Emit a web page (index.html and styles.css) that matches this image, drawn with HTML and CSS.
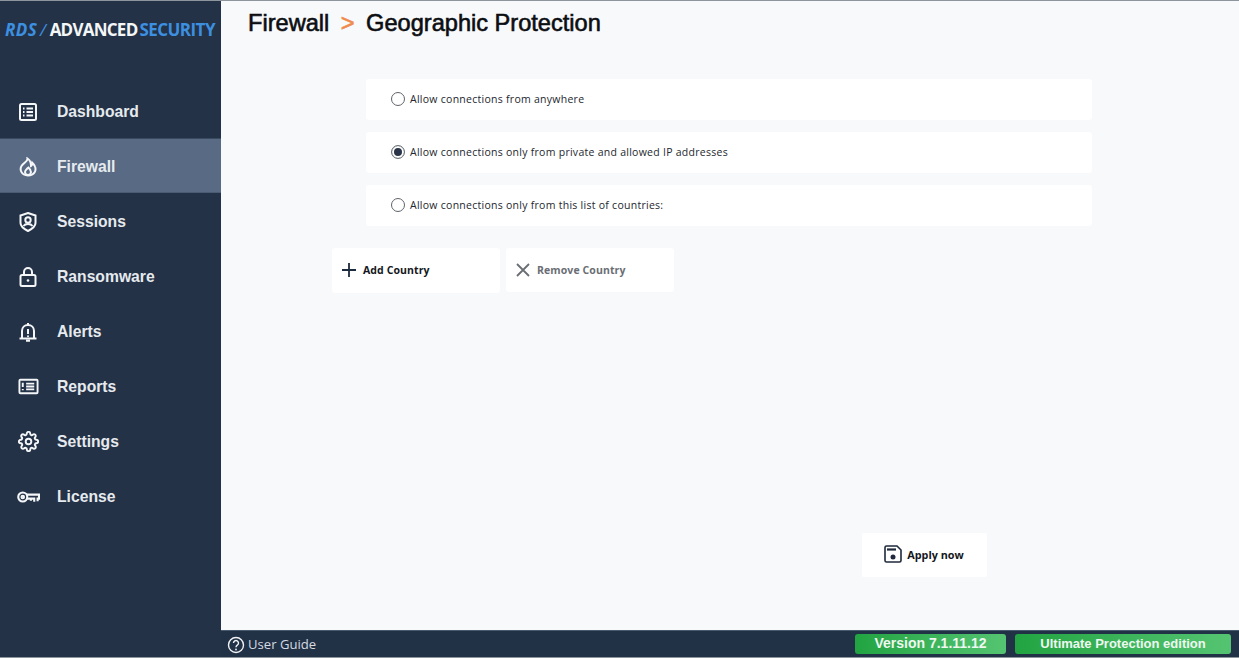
FILE: index.html
```html
<!DOCTYPE html>
<html lang="en">
<head>
<meta charset="utf-8">
<title>RDS Advanced Security</title>
<link rel="stylesheet" href="styles.css">
</head>
<body>
<div class="app">
  <aside class="sidebar">
    <div class="logo"><span class="logo-rds">RDS</span><span class="logo-slash">/</span><span class="logo-adv">ADVANCED</span><span class="logo-sec">SECURITY</span></div>
    <nav class="nav">
      <a class="nav-item"><svg class="nav-icon" viewBox="0 0 20 20"><rect x="2" y="2" width="16" height="16" rx="1.5"/><path d="M5 6.500h1.500M8.500 6.500H15M5 10h1.500M8.500 10H15M5 13.500h1.500M8.500 13.500H15"/></svg><span>Dashboard</span></a>
      <a class="nav-item active"><svg class="nav-icon" viewBox="0 0 20 20"><path d="M9.500 1.500c.5 3-4 4.300-6 7.500-2 3.500-.5 9 6.500 9.500 6.500 0 8.500-5 7-9-.5-1.500-1.500-2.500-2.500-3.500 0 1.500-.5 2.500-1.500 3C13 6 12 3 9.500 1.500z"/><path d="M10 10c.5 1.500-3 2.500-3 5 0 1.500 1.500 3 3 3s3-1.500 3-3c0-2-1.500-3.500-3-5z"/></svg><span>Firewall</span></a>
      <a class="nav-item"><svg class="nav-icon" viewBox="0 0 20 20"><path d="M10 1l7.500 2.500v7.500c0 3.500-3.500 6-7.500 8-4-2-7.500-4.500-7.500-8V3.500z"/><circle cx="10" cy="8" r="2.700"/><path d="M5.500 14c1-1.500 2.500-2 4.500-2s3.500.5 4.500 2"/></svg><span>Sessions</span></a>
      <a class="nav-item"><svg class="nav-icon" viewBox="0 0 20 20"><rect x="2.500" y="8" width="15" height="11" rx="1.500"/><path d="M6 8V5a4 4 0 0 1 8 0v3"/><circle class="fill" cx="10" cy="13.500" r="1.300"/></svg><span>Ransomware</span></a>
      <a class="nav-item"><svg class="nav-icon" viewBox="0 0 20 20"><path d="M1.500 16.500h17M4 16.500V9c0-3.500 2.500-6 6-6s6 2.500 6 6v7.500M10 1v2M8 18.800h4M10 7v5"/><circle class="fill" cx="10" cy="14.300" r="1"/></svg><span>Alerts</span></a>
      <a class="nav-item"><svg class="nav-icon wide" viewBox="0 0 22 20"><rect x="1.500" y="3" width="19" height="14" rx="1"/><path d="M5 6v4.500M5 12.500v1.500M8.500 7H17M8.500 10H17M8.500 13H17"/></svg><span>Reports</span></a>
      <a class="nav-item"><svg class="nav-icon wide gear" viewBox="0 0 24 24"><circle cx="12" cy="12" r="3.200"/><path d="M19.400 15a1.650 1.650 0 0 0 .33 1.820l.06.06a2 2 0 0 1 0 2.830 2 2 0 0 1-2.830 0l-.06-.06a1.650 1.650 0 0 0-1.820-.33 1.650 1.650 0 0 0-1 1.510V21a2 2 0 0 1-2 2 2 2 0 0 1-2-2v-.09A1.650 1.650 0 0 0 9 19.400a1.650 1.650 0 0 0-1.820.33l-.06.06a2 2 0 0 1-2.830 0 2 2 0 0 1 0-2.830l.06-.06a1.650 1.650 0 0 0 .33-1.820 1.650 1.650 0 0 0-1.510-1H3a2 2 0 0 1-2-2 2 2 0 0 1 2-2h.09A1.650 1.650 0 0 0 4.600 9a1.650 1.650 0 0 0-.33-1.820l-.06-.06a2 2 0 0 1 0-2.830 2 2 0 0 1 2.830 0l.06.06a1.650 1.650 0 0 0 1.820.33H9a1.650 1.650 0 0 0 1-1.510V3a2 2 0 0 1 2-2 2 2 0 0 1 2 2v.09a1.650 1.650 0 0 0 1 1.510 1.650 1.650 0 0 0 1.820-.33l.06-.06a2 2 0 0 1 2.830 0 2 2 0 0 1 0 2.830l-.06.06a1.650 1.650 0 0 0-.33 1.820V9a1.650 1.650 0 0 0 1.510 1H21a2 2 0 0 1 2 2 2 2 0 0 1-2 2h-.09a1.650 1.650 0 0 0-1.510 1z"/></svg><span>Settings</span></a>
      <a class="nav-item"><svg class="nav-icon key" viewBox="0 0 24 14"><circle cx="6" cy="7" r="4.700"/><circle cx="6" cy="7" r="1.300"/><path d="M10.500 4.500H23v4.200h-1.500V11.500M10.500 8.700H18V12M14.500 8.700V11"/></svg><span>License</span></a>
    </nav>
  </aside>
  <div class="main">
    <main class="content">
      <h1 class="title"><span>Firewall</span><span class="sep">&gt;</span><span>Geographic Protection</span></h1>
      <div class="options">
        <label class="option"><span class="radio"></span>Allow connections from anywhere</label>
        <label class="option"><span class="radio checked"></span>Allow connections only from private and allowed IP addresses</label>
        <label class="option"><span class="radio"></span>Allow connections only from this list of countries:</label>
      </div>
      <div class="actions">
        <button class="btn add"><svg class="btn-icon" viewBox="0 0 16 16"><path d="M8 1v14M1 8h14"/></svg>Add Country</button>
        <button class="btn remove"><svg class="btn-icon" viewBox="0 0 16 16"><path d="M2 2l12 12M14 2L2 14"/></svg>Remove Country</button>
      </div>
      <div class="apply-row">
        <button class="apply"><svg class="apply-icon" viewBox="0 0 18 18"><path d="M2.500 1h10.500l4 4v10.500a1.500 1.500 0 0 1-1.500 1.500h-13A1.500 1.500 0 0 1 1 15.500v-13A1.500 1.500 0 0 1 2.500 1z"/><path class="thick" d="M3 4.500h9"/><circle class="fill" cx="9" cy="12" r="2.500"/></svg>Apply now</button>
      </div>
    </main>
    <footer class="footer">
      <a class="guide"><svg class="guide-icon" viewBox="0 0 18 18"><circle cx="9" cy="9" r="7.500"/><path d="M6.500 7a2.500 2.500 0 1 1 3.800 2.100C9.400 9.700 9 10.200 9 11.200"/><circle class="fill" cx="9" cy="13.500" r=".9"/></svg>User Guide</a>
      <div class="badges">
        <span class="badge version">Version 7.1.11.12</span>
        <span class="badge edition">Ultimate Protection edition</span>
      </div>
    </footer>
  </div>
</div>
</body>
</html>
```
FILE: styles.css
```css
* { box-sizing: border-box; }
html, body { margin: 0; height: 100%; overflow: hidden; }
body { background: #8f959c; font-family: "Liberation Sans", Arial, sans-serif; }

.app { display: flex; height: 656px; margin-top: 1px; }

.sidebar { width: 221px; flex: none; background: #233246; }
.logo { height: 57px; padding: 19px 0 0 5px; font-family: "Open Sans", sans-serif; font-size: 17px; font-weight: 700; line-height: 20px; white-space: nowrap; letter-spacing: -0.4px; }
.logo-rds { color: #3d8fe0; font-style: italic; letter-spacing: 0.4px; }
.logo-slash { color: #3d8fe0; font-style: italic; margin: 0 4px 0 3px; font-weight: 400; }
.logo-adv { color: #f4f6f8; font-weight: 700; letter-spacing: -0.75px; }
.logo-sec { color: #3d8fe0; margin-left: 2px; font-weight: 700; letter-spacing: -0.55px; }

.nav { display: flex; flex-direction: column; margin-top: 25px; }
.nav-item { display: flex; align-items: center; height: 55px; padding: 2px 0 0 18px; color: #e6eaef; font-size: 15.700px; font-weight: 700; }
.nav-item span { margin-left: 19px; }
.nav-item.active { background: #586a84; box-shadow: inset 0 1px 0 #3a4a60, inset 0 -1px 0 #4a5b74; }
.nav-icon { width: 20px; height: 20px; flex: none; fill: none; stroke: #f4f6f8; stroke-width: 2; }
.nav-icon .fill { fill: #f4f6f8; stroke: none; }
.nav-icon.wide { width: 21px; height: 21px; margin-right: -1px; }
.nav-icon.gear { stroke-width: 2.200; }
.nav-icon.key { width: 23px; height: 14px; margin-left: -1px; margin-right: -2px; stroke-width: 2.200; }

.main { flex: 1; min-width: 0; display: flex; flex-direction: column; }
.content { flex: 1; background: #f8f9fb; padding: 0 0 0 111px; display: flex; flex-direction: column; }

.title { margin: 7px 0 0 -84px; height: 30px; display: flex; font-size: 23.600px; line-height: 30px; font-weight: 400; color: #0c0e12; -webkit-text-stroke: 0.6px #0c0e12; }
.sep { color: #f08a4b; -webkit-text-stroke: 0.6px #f08a4b; margin: 0 11.500px; }

.options { width: 726px; margin: 41px 0 0 34px; display: flex; flex-direction: column; gap: 12px; }
.option { height: 41px; display: flex; align-items: center; padding: 0 0 1px 25px; background: #fff; border-radius: 3px; font-family: "Open Sans", sans-serif; font-size: 10.500px; letter-spacing: 0.27px; color: #23272e; }
.radio { width: 14px; height: 14px; margin-right: 5px; border: 1px solid #5f6368; border-radius: 50%; background: #fff; flex: none; }
.radio.checked { border-color: #6b7076; box-shadow: inset 0 0 0 2px #fff, inset 0 0 0 7px #2a3448; }

.actions { display: flex; gap: 6px; margin-top: 22px; }
.btn { width: 168px; height: 45px; display: flex; align-items: center; padding: 0 0 1px 9px; background: #fff; border: 0; border-radius: 3px; font-family: "Open Sans", sans-serif; font-size: 10.500px; font-weight: 700; letter-spacing: 0.1px; }
.btn.add { color: #14171c; }
.btn.remove { color: #6a6e74; height: 44px; }
.btn-icon { width: 16px; height: 16px; margin-right: 6px; fill: none; stroke-width: 1.800; flex: none; }
.add .btn-icon { stroke: #1b2a3d; }
.remove .btn-icon { stroke: #6a6e74; }

.apply-row { display: flex; margin-top: 240px; padding-left: 530px; }
.apply { width: 125px; height: 44px; display: flex; align-items: center; justify-content: center; gap: 5px; padding: 0 1px 2px 0; background: #fff; border: 0; border-radius: 2px; font-family: "Open Sans", sans-serif; font-size: 10.800px; font-weight: 700; color: #14171c; }
.apply-icon { width: 18px; height: 18px; fill: none; stroke: #1f2a3c; stroke-width: 1.600; }
.apply-icon .thick { stroke-width: 2.200; }
.apply-icon .fill { fill: #1f2a3c; stroke: none; }

.footer { height: 27px; flex: none; display: flex; align-items: center; justify-content: space-between; background: #223246; border-top: 1px solid #4a5a6e; padding: 0 8px 0 6px; }
.guide { display: flex; align-items: center; gap: 3px; color: #d6dbe2; font-family: "Open Sans", sans-serif; font-size: 13.100px; margin-bottom: 1px; }
.guide-icon { width: 18px; height: 18px; fill: none; stroke: #f0f2f5; stroke-width: 1.400; margin-top: 2px; }
.guide-icon .fill { fill: #f0f2f5; stroke: none; }
.badges { display: flex; gap: 9px; }
.badge { height: 20px; padding-bottom: 2px; display: flex; align-items: center; justify-content: center; border-radius: 3px; background: linear-gradient(90deg, #22a442, #55c472); color: #eef7f0; font-weight: 700; }
.version { width: 151px; font-size: 14px; }
.edition { width: 216px; font-size: 13px; }
```
